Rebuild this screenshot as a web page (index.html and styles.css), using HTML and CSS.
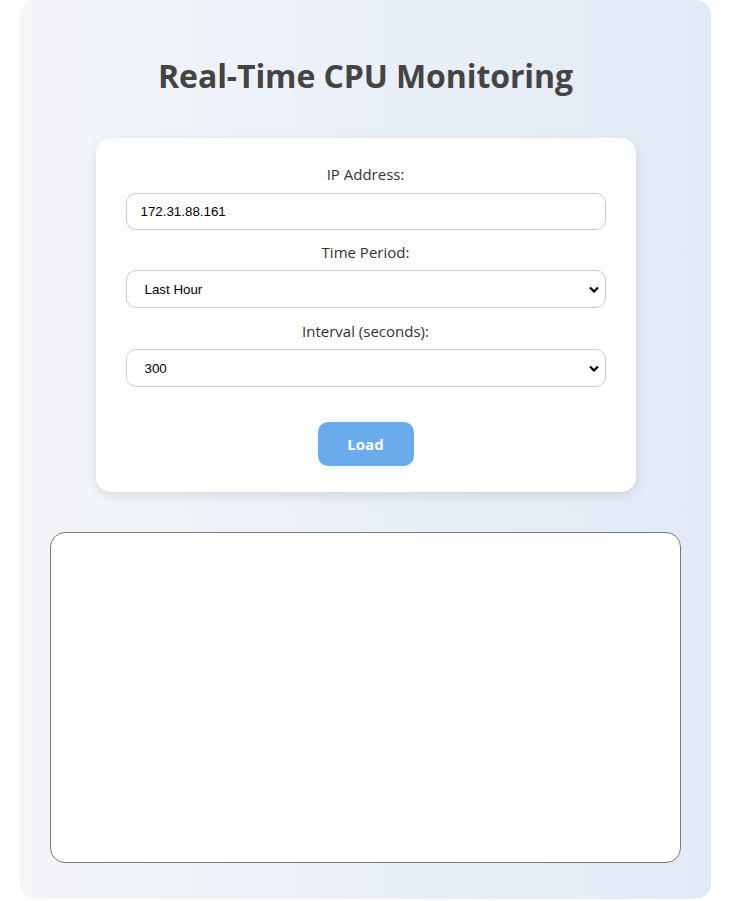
FILE: index.html
```html
<!DOCTYPE html>
<html lang="en">
<head>
<meta charset="utf-8">
<title>Real-Time CPU Monitoring</title>
<link rel="stylesheet" href="styles.css">
</head>
<body>
<div class="container">
  <h1 class="title">Real-Time CPU Monitoring</h1>
  <form class="form-card">
    <label class="field-label" for="ip">IP Address:</label>
    <input class="field" id="ip" type="text" value="172.31.88.161">
    <label class="field-label" for="period">Time Period:</label>
    <select class="field select" id="period">
      <option>Last Hour</option>
    </select>
    <label class="field-label" for="interval">Interval (seconds):</label>
    <select class="field select" id="interval">
      <option>300</option>
    </select>
    <button class="load-btn" type="button">Load</button>
  </form>
  <div class="chart-box"></div>
</div>
</body>
</html>
```

FILE: styles.css
```css
html, body {
  margin: 0;
  padding: 0;
  background: #ffffff;
}
body {
  font-family: "Open Sans", "Noto Sans", sans-serif;
  color: #333;
}
.container {
  margin: 0 20px;
  height: 899px;
  box-sizing: border-box;
  padding: 52px 30px 36px;
  border-radius: 15px;
  background: linear-gradient(90deg, #f4f6f9 0%, #e1eaf6 100%);
  display: flex;
  flex-direction: column;
  align-items: center;
}
.title {
  margin: 0;
  font-size: 32px;
  line-height: 48px;
  font-weight: 700;
  color: #444;
  letter-spacing: -0.1px;
}
.form-card {
  margin-top: 38px;
  width: 540px;
  box-sizing: border-box;
  background: #fff;
  border-radius: 15px;
  box-shadow: 0 4px 12px rgba(0, 0, 0, 0.1);
  padding: 26px 30px 26px;
  display: flex;
  flex-direction: column;
  align-items: center;
}
.field-label {
  font-size: 15px;
  line-height: 20px;
  font-weight: 500;
  color: #333;
  margin-bottom: 9px;
}
.field {
  width: 100%;
  box-sizing: border-box;
  height: 37px;
  border: 1px solid #ccc;
  border-radius: 10px;
  background: #fff;
  font-family: "Liberation Sans", Arial, sans-serif;
  font-size: 13.33px;
  color: #000;
  padding: 0 14px;
  margin-bottom: 12px;
}
.select {
  height: 38px;
  margin-top: -1px;
  padding: 0 18px;
  appearance: none;
  -webkit-appearance: none;
  background-image: url("data:image/svg+xml;utf8,<svg xmlns='http://www.w3.org/2000/svg' width='10' height='7' viewBox='0 0 10 7'><path d='M1 1.5 L5 5.5 L9 1.5' fill='none' stroke='black' stroke-width='2.2'/></svg>");
  background-repeat: no-repeat;
  background-position: right 6px center;
  background-size: 10px 7px;
}
#period {
  margin-bottom: 13px;
}
#interval {
  margin-bottom: 35px;
}
.load-btn {
  width: 96px;
  height: 44px;
  border: none;
  border-radius: 10px;
  background: #6aabeb;
  color: #fff;
  font-family: "Open Sans", "Noto Sans", sans-serif;
  font-weight: 700;
  font-size: 15px;
}
.chart-box {
  margin-top: 40px;
  width: 100%;
  height: 332px;
  box-sizing: border-box;
  background: #fff;
  border: 1px solid #7a7a7a;
  border-radius: 15px;
}
```
